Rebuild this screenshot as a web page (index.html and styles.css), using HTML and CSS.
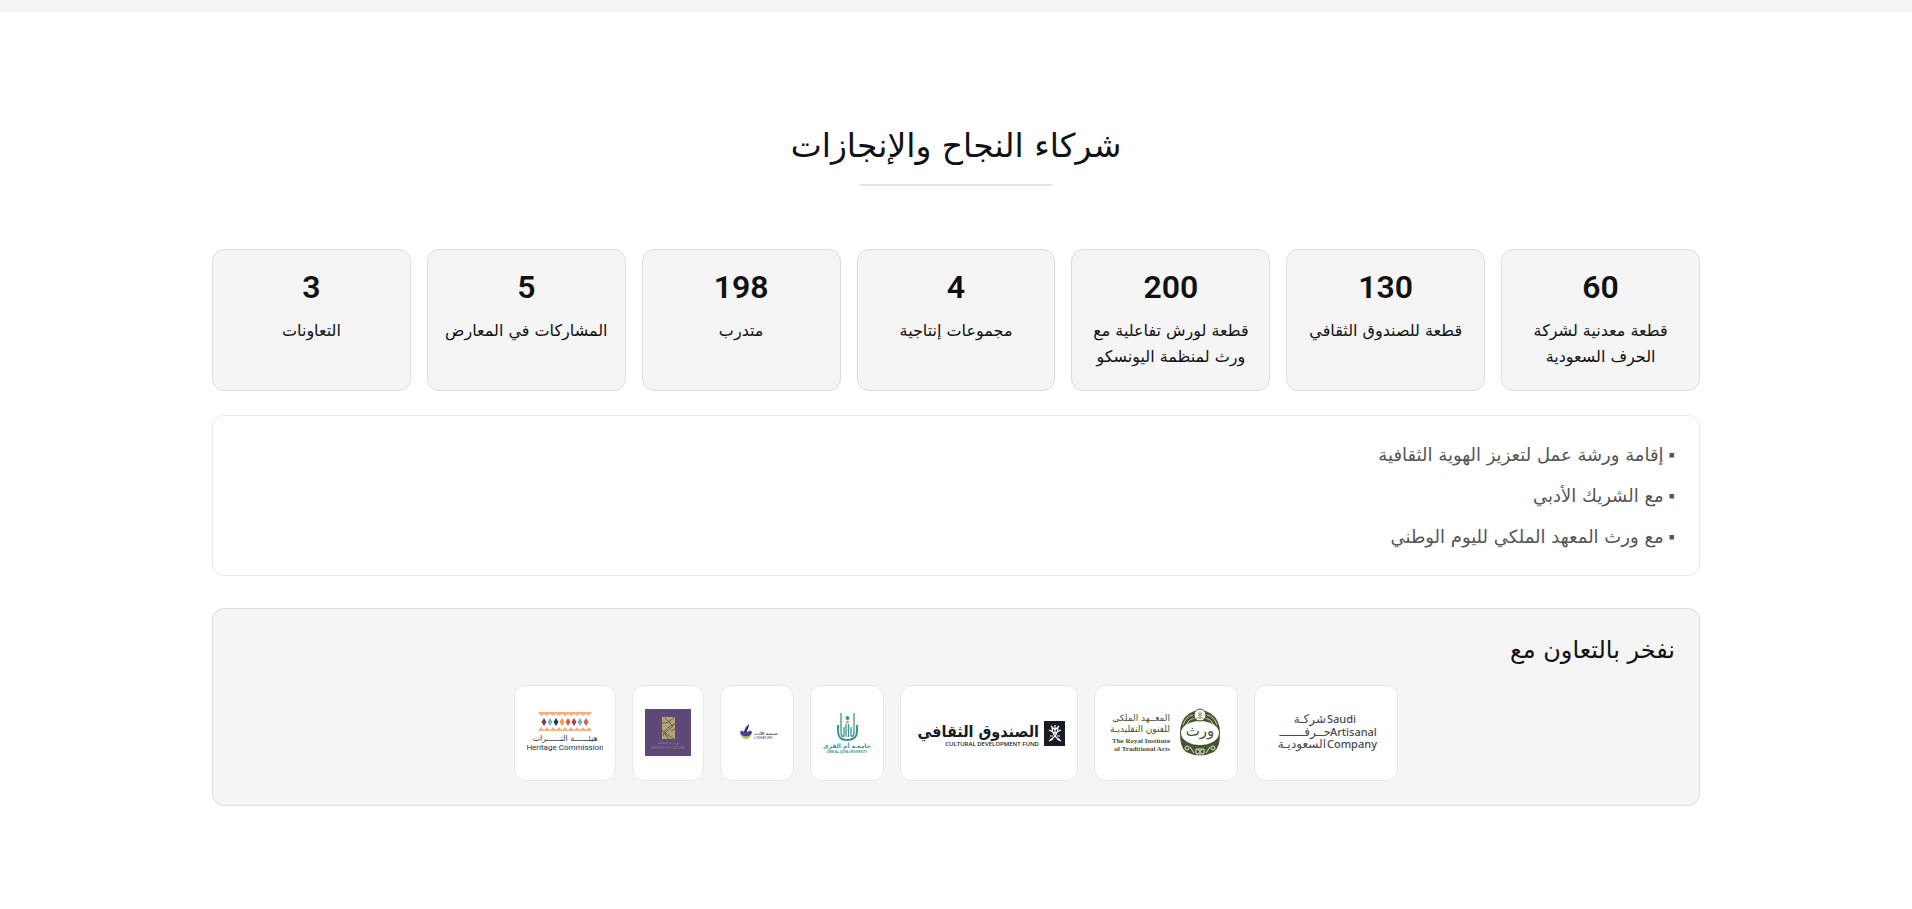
FILE: index.html
```html
<!DOCTYPE html>
<html lang="ar" dir="rtl">
<head>
    <meta charset="UTF-8">
    <meta name="viewport" content="width=device-width, initial-scale=1.0">
    <title>شركاء النجاح والإنجازات</title>
    <link rel="stylesheet" href="styles.css">
</head>
<body>
    <div class="top-strip"></div>
    <section class="partners">
        <h2 class="title">شركاء النجاح والإنجازات</h2>
        <div class="title-line"></div>

        <div class="stats">
            <div class="stat">
                <p class="number">60</p>
                <p class="label">قطعة معدنية لشركة الحرف السعودية</p>
            </div>
            <div class="stat">
                <p class="number">130</p>
                <p class="label">قطعة للصندوق الثقافي</p>
            </div>
            <div class="stat">
                <p class="number">200</p>
                <p class="label">قطعة لورش تفاعلية مع ورث لمنظمة اليونسكو</p>
            </div>
            <div class="stat">
                <p class="number">4</p>
                <p class="label">مجموعات إنتاجية</p>
            </div>
            <div class="stat">
                <p class="number">198</p>
                <p class="label">متدرب</p>
            </div>
            <div class="stat">
                <p class="number">5</p>
                <p class="label">المشاركات في المعارض</p>
            </div>
            <div class="stat">
                <p class="number">3</p>
                <p class="label">التعاونات</p>
            </div>
        </div>

        <ul class="events">
            <li>إقامة ورشة عمل لتعزيز الهوية الثقافية</li>
            <li>مع الشريك الأدبي</li>
            <li>مع ورث المعهد الملكي لليوم الوطني</li>
        </ul>

        <div class="collab">
            <h3 class="subtitle">نفخر بالتعاون مع</h3>
            <div class="logos">
                <div class="logo">
                    <svg width="118" height="70" viewBox="0 0 118 70" fill="#4a4a4c">
                        <g font-family="Noto Sans" font-size="11" font-weight="500" text-anchor="start">
                            <text x="60" y="25">Saudi</text>
                            <text x="63" y="38">Artisanal</text>
                            <text x="60" y="50">Company</text>
                        </g>
                        <g font-family="DejaVu Sans" font-size="12" text-anchor="end">
                            <text x="59" y="25">شركـة</text>
                            <text x="64" y="38">حــرفـــــــ</text>
                            <text x="59" y="50">السعوديـة</text>
                        </g>
                    </svg>
                </div>
                <div class="logo">
                    <svg width="118" height="70" viewBox="0 0 118 70" fill="#47542f">
                        <g font-family="DejaVu Sans" font-size="9" text-anchor="end">
                            <text x="63" y="23">المعــهد الملكي</text>
                            <text x="63" y="34">للفنون التقليديـة</text>
                        </g>
                        <g font-family="Liberation Serif" font-size="7" font-weight="bold" text-anchor="end">
                            <text x="63" y="45">The Royal Institute</text>
                            <text x="63" y="53">of Traditional Arts</text>
                        </g>
                        <path d="M83 15Q93 9 103 15Q113 21 113 35Q113 50 107 54Q93 61 79 54Q73 50 73 35Q73 21 83 15Z"/>
                        <path d="M76 27Q79 18 86 17M79 27Q82 21 87 20M110 27Q107 18 100 17M107 27Q104 21 99 20" fill="none" stroke="#c3c9b4"/>
                        <ellipse cx="93" cy="35" rx="19" ry="12" fill="#fff"/>
                        <circle cx="93" cy="17" r="6" fill="#fff" stroke="#47542f"/>
                        <path d="M93 13V21M90 20H96M91 15L95 18M95 15L91 18" stroke="#8b9479" fill="none"/>
                        <g fill="none" stroke="#e4e7dc">
                            <circle cx="80" cy="50" r="2"/>
                            <circle cx="106" cy="50" r="2"/>
                            <path d="M89 51H97V56H89ZM91 51L95 56M95 51L91 56M83 49L87 55M103 49L99 55"/>
                        </g>
                        <text x="93" y="38" font-family="DejaVu Sans" font-size="15" text-anchor="middle">ورث</text>
                    </svg>
                </div>
                <div class="logo">
                    <svg width="152" height="70" viewBox="0 0 152 70" fill="#171d22">
                        <text x="126" y="39" font-family="DejaVu Sans Condensed, DejaVu Sans" font-size="16" font-weight="bold" text-anchor="end">الصندوق الثقافي</text>
                        <text x="126" y="48" font-family="Open Sans" font-size="6" font-weight="600" text-anchor="end">CULTURAL DEVELOPMENT FUND</text>
                        <rect x="131" y="23" width="21" height="25"/>
                        <path d="M137 42Q145 38 145 29M147 42Q139 38 139 29M142 27V36M138 28L142 32L146 28M136 32L142 35L148 32M136 43L140 41M148 43L144 41M137 38H140M144 38H147" fill="none" stroke="#fff" stroke-width="1.2"/>
                    </svg>
                </div>
                <div class="logo">
                    <svg width="48" height="70" viewBox="0 0 48 70" fill="#3f9490">
                        <g fill="none" stroke="#3f9490" stroke-width="1.3">
                            <path d="M15 27V33Q15 42 24 42Q34 42 34 33V27" stroke-width="2"/>
                            <path d="M18 15V35Q18 38 21 39M31 15V35Q31 38 28 39M21 29V38M23 26V39M25.500 26V39M28 29V38"/>
                        </g>
                        <circle cx="24.500" cy="20" r="2"/>
                        <circle cx="24.500" cy="24" r="1.500" fill="#d79b72"/>
                        <g text-anchor="middle">
                            <text x="24" y="50" font-family="DejaVu Sans" font-size="6" font-weight="bold">جامعـة أم القرى</text>
                            <text x="24" y="55" font-family="Liberation Sans" font-size="3" font-weight="bold">UMM AL-QURA UNIVERSITY</text>
                        </g>
                    </svg>
                </div>
                <div class="logo">
                    <svg width="48" height="70" viewBox="0 0 48 70" fill="#4e4390">
                        <path d="M7 34Q9 31 11 34Q13 31 15 34Q17 31 19 34Q19 38 13 39Q7 38 7 34Z"/>
                        <path d="M11 34Q12 29 16 26Q16 31 12 35Z" fill="#343065"/>
                        <path d="M8 37Q13 40 18 37Q17 41 13 41Q9 41 8 37Z" fill="#b5c85a"/>
                        <g text-anchor="start">
                            <text x="21" y="37" font-family="DejaVu Sans" font-size="4" font-weight="bold">جمعية الأدب</text>
                            <text x="21" y="41" font-family="Liberation Sans" font-size="3">LITERATURE</text>
                        </g>
                    </svg>
                </div>
                <div class="logo">
                    <svg width="46" height="70" viewBox="0 0 46 70">
                        <rect y="11" width="46" height="47" fill="#5d4878"/>
                        <rect x="17" y="19" width="13" height="22" fill="#b1a373"/>
                        <path d="M17 25Q24 26 29 19M18 38Q20 29 30 26M20 20L28 28L20 35L29 41M17 32L24 41M26 33L30 31" fill="none" stroke="#6d5a5c"/>
                        <g fill="#94809a" text-anchor="middle">
                            <text x="23" y="46" font-family="DejaVu Sans" font-size="4">وزارة الثقافة</text>
                            <text x="23" y="51" font-family="Liberation Sans" font-size="3">MINISTRY OF CULTURE</text>
                        </g>
                    </svg>
                </div>
                <div class="logo">
                    <svg width="76" height="70" viewBox="0 0 76 70" fill="#1f3345">
                        <g fill="#f6b17f">
                            <path d="M11 14H65L62 18L59 16L56 18L53 16L50 18L47 16L44 18L41 16L38 18L35 16L32 18L29 16L26 18L23 16L20 18L17 16L14 18Z"/>
                            <path d="M11 33H65L62 29L59 32L56 29L53 32L50 29L47 32L44 29L41 32L38 29L35 32L32 29L29 32L26 29L23 32L20 29L17 32L14 29Z"/>
                        </g>
                        <path d="M17 20l2.500 4l-2.500 4l-2.500-4z" fill="#8c2f55"/>
                        <path d="M23 20l2.500 4l-2.500 4l-2.500-4z" fill="#71b8b9"/>
                        <path d="M29 20l2.500 4l-2.500 4l-2.500-4z" fill="#1f3d55"/>
                        <path d="M35 20l2.500 4l-2.500 4l-2.500-4z" fill="#f09a3e"/>
                        <path d="M41 20l2.500 4l-2.500 4l-2.500-4z" fill="#e2574c"/>
                        <path d="M47 20l2.500 4l-2.500 4l-2.500-4z" fill="#b93556"/>
                        <path d="M53 20l2.500 4l-2.500 4l-2.500-4z" fill="#71b8b9"/>
                        <path d="M59 20l2.500 4l-2.500 4l-2.500-4z" fill="#e2574c"/>
                        <g text-anchor="middle">
                            <text x="38" y="43" font-family="DejaVu Sans" font-size="8">هيئــــــة التــــــراث</text>
                            <text x="38" y="52" font-family="Roboto" font-size="8">Heritage Commission</text>
                        </g>
                    </svg>
                </div>
            </div>
        </div>
    </section>
</body>
</html>
```
FILE: styles.css
```css
* {
    box-sizing: border-box;
    margin: 0;
    padding: 0;
}

body {
    background-color: #fff;
    color: #111;
    font-family: "DejaVu Sans", sans-serif;
}

.top-strip {
    height: 12px;
    background-color: #f5f5f5;
}

.partners {
    max-width: 1536px;
    margin: 0 auto;
    padding: 104px 24px 96px;
}

.title {
    font-size: 33px;
    line-height: 60px;
    font-weight: normal;
    text-align: center;
}

.title-line {
    width: 192px;
    height: 2px;
    margin: 8px auto 63px;
    background-color: #e5e5e5;
}

.stats {
    display: grid;
    grid-template-columns: repeat(7, 1fr);
    gap: 16px;
}

.stat {
    padding: 20px 16px;
    border: 1px solid #dedede;
    border-radius: 12px;
    background-color: #f5f5f5;
    text-align: center;
}

.number {
    font-family: Roboto, sans-serif;
    font-size: 32px;
    line-height: 34px;
    font-weight: 600;
    margin-bottom: 14px;
}

.label {
    font-size: 16px;
    line-height: 26px;
}

.events {
    margin-top: 24px;
    padding: 24px;
    border: 1px solid #e8e8e8;
    border-radius: 12px;
    list-style: none;
    display: grid;
    gap: 12px;
    font-size: 18px;
    line-height: 29px;
    color: #555;
}

.events li::before {
    content: "▪ ";
    font-family: "Liberation Sans", sans-serif;
    line-height: 1;
}

.collab {
    margin-top: 32px;
    padding: 24px;
    border: 1px solid #dedede;
    border-radius: 12px;
    background-color: #f5f5f5;
}

.subtitle {
    font-size: 24px;
    line-height: 34px;
    font-weight: normal;
    margin-bottom: 18px;
}

.logos {
    display: flex;
    flex-wrap: wrap;
    justify-content: center;
    gap: 16px;
}

.logo {
    padding: 12px;
    border: 1px solid #e8e8e8;
    border-radius: 12px;
    background-color: #fff;
}

.logo svg {
    display: block;
    direction: ltr;
}
```
